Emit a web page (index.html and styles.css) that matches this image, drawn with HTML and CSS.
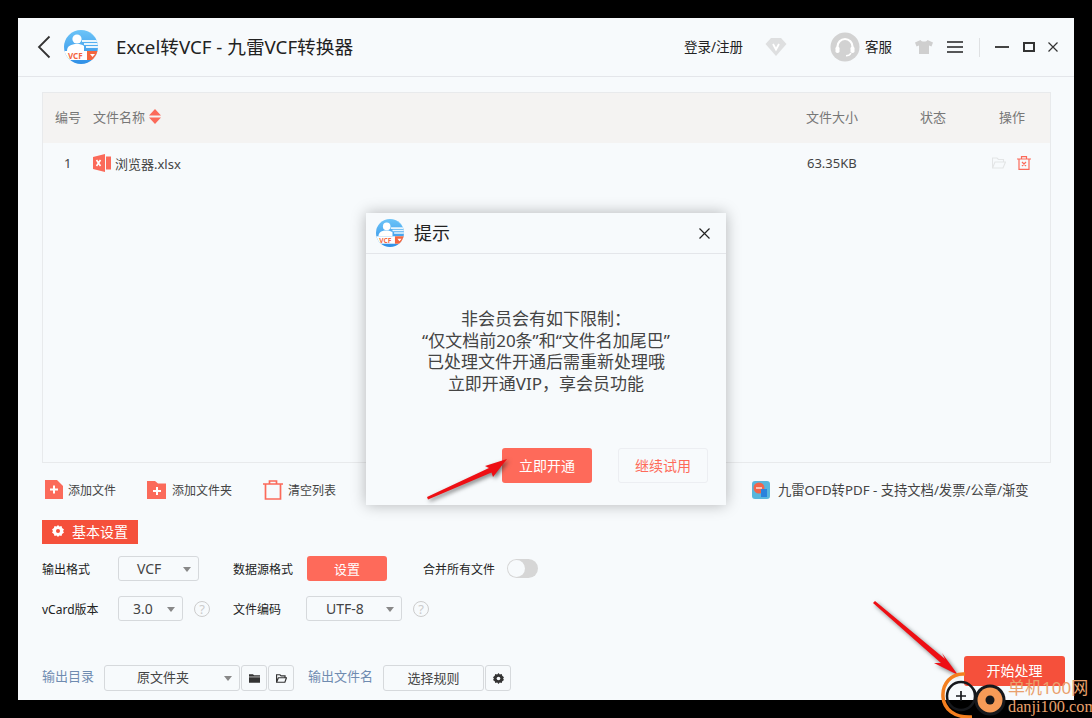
FILE: index.html
```html
<!DOCTYPE html>
<html lang="en">
<head>
    <meta charset="UTF-8">
    <meta name="viewport" content="width=device-width, initial-scale=1.0">
    <title>Excel转VCF - 九雷VCF转换器</title>
    <link rel="stylesheet" href="styles.css">
</head>
<body>
    <svg class="defs" width="0" height="0">
        <defs>
            <linearGradient id="logoBlue" x1="0" y1="0" x2="0" y2="1">
                <stop offset="0" stop-color="#6cc4f8"/>
                <stop offset="1" stop-color="#2f8fe6"/>
            </linearGradient>
            <clipPath id="logoClip"><circle cx="17" cy="17" r="17"/></clipPath>
            <symbol id="logo" viewBox="0 0 34 34">
                <g clip-path="url(#logoClip)">
                    <rect width="34" height="34" fill="url(#logoBlue)"/>
                    <path d="M23 0h11v10z" fill="#8fd3fa"/>
                    <circle cx="13" cy="9" r="4.6" fill="#fff"/>
                    <path d="M3 21c0-5 4-7 10-7 3 0 5 .6 7 2v5z" fill="#fff"/>
                    <path d="M18 10h16v2H18zM20 13h14v2H20zM22 16h12v2H22z" fill="#e8f5fd"/>
                    <rect y="21" width="34" height="9" fill="#fff"/>
                    <rect x="23" y="21" width="11" height="9" fill="#f4663f"/>
                    <path d="M26 24h5l-2.500 3z" fill="#fff"/>
                    <text x="4" y="29" class="logo-text">VCF</text>
                </g>
            </symbol>
        </defs>
    </svg>

    <div class="window">
        <header class="topbar">
            <svg class="back" width="14" height="24" viewBox="0 0 14 24"><path d="M12.500 1.500 2 12l10.500 10.500" fill="none" stroke="#333" stroke-width="1.800"/></svg>
            <svg class="app-logo" width="34" height="34"><use href="#logo"/></svg>
            <h1 class="app-title">Excel转VCF - 九雷VCF转换器</h1>
            <span class="login">登录/注册</span>
            <svg class="diamond" width="22" height="20" viewBox="0 0 22 20">
                <path d="M6 1h10l5.500 6L11 19 .5 7z" fill="#dedfe0"/>
                <path d="M8 7l3 5.500L14 7" fill="none" stroke="#fff" stroke-width="1.800"/>
            </svg>
            <svg class="headset" width="30" height="30" viewBox="0 0 30 30">
                <circle cx="15" cy="15" r="14.500" fill="#d2d2d2"/>
                <path d="M7.500 18v-3.500a7.500 7.500 0 0 1 15 0V18" fill="none" stroke="#fff" stroke-width="2.200"/>
                <rect x="5.500" y="14.500" width="4" height="6.500" rx="1.800" fill="#fff"/>
                <rect x="20.500" y="14.500" width="4" height="6.500" rx="1.800" fill="#fff"/>
                <path d="M21 21c-1 2-3 2.800-5 2.800" fill="none" stroke="#fff" stroke-width="1.400"/>
            </svg>
            <span class="service">客服</span>
            <svg class="shirt" width="18" height="14" viewBox="0 0 18 14"><path d="M5.500 0 0 2.500 1.500 6.500 4 5.500V14h10V5.500l2.500 1L18 2.500 12.500 0C11.500 2 6.500 2 5.500 0z" fill="#cfcfcf"/></svg>
            <svg class="menu" width="16" height="12" viewBox="0 0 16 12"><path d="M0 1h16M0 6h16M0 11h16" stroke="#222" stroke-width="1.400"/></svg>
            <span class="divider"></span>
            <svg class="win-min" width="14" height="2" viewBox="0 0 14 2"><rect width="14" height="2" fill="#444"/></svg>
            <svg class="win-max" width="12" height="10" viewBox="0 0 12 10"><rect x="1" y="1" width="10" height="8" fill="none" stroke="#333" stroke-width="2"/></svg>
            <svg class="win-close" width="10" height="10" viewBox="0 0 10 10"><path d="M.5.500l9 9M9.500.500l-9 9" stroke="#333" stroke-width="1.200"/></svg>
        </header>

        <section class="file-panel">
            <div class="file-head file-grid">
                <span>编号</span>
                <span class="sort-title">文件名称
                    <svg width="12" height="15" viewBox="0 0 12 15"><path d="M6 0l6 6.500H0zM6 15l6-6.500H0z" fill="#fb6a5a"/></svg>
                </span>
                <span>文件大小</span>
                <span>状态</span>
                <span class="head-ops">操作</span>
            </div>
            <div class="file-row file-grid">
                <span class="file-no">1</span>
                <span class="file-name">
                    <svg width="18" height="18" viewBox="0 0 18 18">
                        <path d="M0 3l12-3v18L0 15z" fill="#fb6a5a"/>
                        <rect x="13" y="2.500" width="5" height="13" fill="#fb6a5a"/>
                        <path d="M3.500 6l4 6M7.500 6l-4 6" stroke="#fff" stroke-width="1.600"/>
                    </svg>
                    浏览器.xlsx
                </span>
                <span class="file-size">63.35KB</span>
                <span></span>
                <span class="file-ops">
                    <svg width="14" height="12" viewBox="0 0 14 12"><path d="M.5 11V1h4.500l1.500 1.500h5V5M.5 11h10.500l2.500-6H3z" fill="none" stroke="#e3e5e6" stroke-width="1.100"/></svg>
                    <svg width="14" height="14" viewBox="0 0 14 14"><path d="M0 3h14M4.500 3V.6h5V3M2 3v10.400h10V3M5 6l4 4M9 6l-4 4" fill="none" stroke="#fb6a5a" stroke-width="1.200"/></svg>
                </span>
            </div>
        </section>

        <div class="toolbar">
            <span class="tool tool-file">
                <svg width="18" height="19" viewBox="0 0 18 19"><path d="M0 0h12l6 6v13H0z" fill="#fb6a5a"/><path d="M9 5.500v8M5 9.500h8" stroke="#fff" stroke-width="2"/></svg>
                添加文件
            </span>
            <span class="tool tool-folder">
                <svg width="19" height="18" viewBox="0 0 19 18"><path d="M0 0h8l3 2.500h8V18H0z" fill="#fb6a5a"/><path d="M10 6v8M6 10h8" stroke="#fff" stroke-width="2"/></svg>
                添加文件夹
            </span>
            <span class="tool tool-clear">
                <svg width="20" height="20" viewBox="0 0 20 20"><path d="M0 4h20M6.500 4V1h7v3M2.500 4v15h15V4" fill="none" stroke="#fb6a5a" stroke-width="1.700"/></svg>
                清空列表
            </span>
            <span class="tool tool-promo">
                <svg width="18" height="18" viewBox="0 0 18 18">
                    <rect width="18" height="18" rx="3" fill="#58b6dc"/>
                    <circle cx="7" cy="7" r="5.500" fill="#f1654a"/>
                    <rect x="9" y="8" width="6" height="8" fill="#2a82dc"/>
                    <path d="M4 7h6" stroke="#fff" stroke-width="1.200"/>
                </svg>
                九雷OFD转PDF - 支持文档/发票/公章/渐变
            </span>
        </div>

        <div class="settings-tag">
            <svg width="12" height="12" viewBox="0 0 12 12"><path d="M6 0l1.400 1.600 2.100-.6.600 2.100L12 4.500 11 6l1 1.500-1.900 1.400-.6 2.100-2.100-.6L6 12l-1.400-1.600-2.100.6-.6-2.100L0 7.500 1 6 0 4.500l1.900-1.400.6-2.100 2.100.6z" fill="#fff"/><circle cx="6" cy="6" r="2" fill="#f5503b"/></svg>
            基本设置
        </div>

        <div class="form-row form-row-first">
            <label class="field-label">输出格式</label>
            <div class="select select-format">VCF</div>
            <label class="field-label label-source">数据源格式</label>
            <button class="btn-set" type="button">设置</button>
            <label class="field-label label-merge">合并所有文件</label>
            <span class="switch"></span>
        </div>

        <div class="form-row form-row-second">
            <label class="field-label">vCard版本</label>
            <div class="select select-version">3.0</div>
            <span class="help">?</span>
            <label class="field-label label-encoding">文件编码</label>
            <div class="select select-encoding">UTF-8</div>
            <span class="help">?</span>
        </div>

        <div class="output-row">
            <label class="output-label">输出目录</label>
            <div class="select select-dir">原文件夹</div>
            <button class="icon-btn" type="button">
                <svg width="11" height="9" viewBox="0 0 14 11"><path d="M0 0h5l1.500 1.500H14V11H0z" fill="#333"/><path d="M0 3.500h14" stroke="#fff" stroke-width=".8"/></svg>
            </button>
            <button class="icon-btn" type="button">
                <svg width="11" height="9" viewBox="0 0 14 11"><path d="M.7 10.300V.7h4.300l1.500 1.500h5V4.500M.7 10.300h10.600l2-5.800H3z" fill="none" stroke="#333" stroke-width="1.500"/></svg>
            </button>
            <label class="output-label label-filename">输出文件名</label>
            <button class="rule-btn" type="button">选择规则</button>
            <button class="icon-btn" type="button">
                <svg width="11" height="11" viewBox="0 0 12 12"><path d="M6 0l1.400 1.600 2.100-.6.600 2.100L12 4.500 11 6l1 1.500-1.900 1.400-.6 2.100-2.100-.6L6 12l-1.400-1.600-2.100.6-.6-2.100L0 7.500 1 6 0 4.500l1.900-1.400.6-2.100 2.100.6z" fill="#333"/><circle cx="6" cy="6" r="2" fill="#f7fafc"/></svg>
            </button>
            <button class="btn-start" type="button">开始处理</button>
        </div>

        <div class="modal">
            <div class="modal-head">
                <svg width="28" height="28"><use href="#logo"/></svg>
                <span class="modal-title">提示</span>
                <svg class="modal-close" width="11" height="11" viewBox="0 0 11 11"><path d="M.5.500l10 10M10.500.500l-10 10" stroke="#222" stroke-width="1.200"/></svg>
            </div>
            <div class="modal-text">
                <p>非会员会有如下限制：</p>
                <p>“仅文档前20条”和“文件名加尾巴”</p>
                <p>已处理文件开通后需重新处理哦</p>
                <p>立即开通VIP，享会员功能</p>
            </div>
            <div class="modal-actions">
                <button class="btn-open" type="button">立即开通</button>
                <button class="btn-trial" type="button">继续试用</button>
            </div>
        </div>
    </div>

    <!-- red annotation arrows drawn on top of the screenshot -->
    <svg class="arrows" width="1092" height="718" viewBox="0 0 1092 718">
        <path d="M427 497 L489 468 L485 466 L507 459 L493 477 L491.500 472.500 L428 499.500z" fill="#ee0f14"/>
        <path d="M873 603 L875 601 L945 659 L942 653 L958 675 L934 663 L941 663z" fill="#ee0f14"/>
    </svg>

    <div class="watermark">
        <svg class="mark-logo" width="66" height="48" viewBox="0 0 66 48">
            <path d="M24 3C10 2 1 13 2 26c1 12 11 21 29 20" fill="none" stroke="#f47f1f" stroke-width="3.500"/>
            <circle cx="20" cy="25" r="14" fill="none" stroke="#16181c" stroke-width="2.500"/>
            <path d="M15 25h10M20 20v10" stroke="#16181c" stroke-width="1.700"/>
            <path d="M33 18l3 6 3-6M36 24v8" fill="none" stroke="#16181c" stroke-width="1.600"/>
            <circle cx="49" cy="29" r="15.500" fill="#16181c"/>
            <circle cx="49" cy="29" r="12.500" fill="#f79b57"/>
            <circle cx="49" cy="29" r="4.500" fill="#16181c"/>
        </svg>
        <span class="mark-cn">单机100网</span>
        <span class="mark-en">danji100.com</span>
    </div>
</body>
</html>
```

FILE: styles.css
```css
* {
    box-sizing: border-box;
}

body {
    margin: 0;
    width: 1092px;
    height: 718px;
    overflow: hidden;
    position: relative;
    background-color: #000;
    font-family: "Noto Sans", "Noto Sans CJK SC", sans-serif;
    color: #333;
}

.defs {
    position: absolute;
}

.logo-text {
    font-family: "Noto Sans", sans-serif;
    font-size: 8px;
    font-weight: 700;
    fill: #f4663f;
}

.window {
    position: relative;
    margin: 18px 0 0 18px;
    width: 1056px;
    height: 682px;
    background-color: #f7fafc;
}

/* top bar */
.topbar {
    display: flex;
    align-items: center;
    height: 59px;
    border-bottom: 1px solid #e4e6ea;
    padding-left: 19px;
}

.back {
    margin-right: 13px;
}

.app-logo {
    margin-right: 18px;
}

.app-title {
    margin: 0;
    width: 568px;
    font-size: 18.700px;
    line-height: 26px;
    font-weight: 400;
    color: #222;
    white-space: nowrap;
}

.login {
    width: 81px;
    padding-bottom: 2px;
    font-size: 13.500px;
    color: #222;
    white-space: nowrap;
}

.diamond {
    margin-right: 43px;
}

.headset {
    margin-right: 5px;
}

.service {
    width: 50px;
    padding-bottom: 2px;
    font-size: 13.500px;
    color: #222;
}

.shirt {
    margin-right: 14px;
}

.menu {
    margin-right: 16px;
}

.divider {
    width: 1px;
    height: 19px;
    background-color: #dfe1e3;
    margin-right: 15px;
}

.win-min {
    margin-right: 14px;
}

.win-max {
    margin-right: 13px;
}

/* file table */
.file-panel {
    margin: 15px 23px 0 24px;
    height: 371px;
    border: 1px solid #e8eaec;
}

.file-grid {
    display: grid;
    grid-template-columns: 38px 713px 114px 77px 1fr;
    align-items: center;
    padding-left: 12px;
    padding-bottom: 4px;
    font-size: 13px;
}

.file-head {
    height: 50px;
    background-color: #f4f3f2;
    color: #777;
}

.head-ops {
    padding-left: 2px;
}

.sort-title {
    display: flex;
    align-items: center;
    gap: 4px;
}

.file-row {
    height: 44px;
    color: #444;
}

.file-no {
    padding-left: 9px;
}

.file-name {
    display: flex;
    align-items: center;
    gap: 4px;
}

.file-size {
    padding-left: 1px;
}

.file-ops {
    display: flex;
    align-items: center;
    gap: 11px;
    margin-left: -5px;
}

/* toolbar under the table */
.toolbar {
    display: flex;
    align-items: center;
    height: 57px;
    padding-left: 27px;
    padding-bottom: 4px;
    font-size: 12px;
    color: #444;
}

.tool {
    display: flex;
    align-items: center;
    white-space: nowrap;
}

.tool svg {
    margin-right: 5px;
}

.tool-file {
    width: 102px;
}

.tool-folder {
    width: 116px;
}

.tool-folder svg {
    margin-right: 6px;
}

.tool-clear {
    width: 489px;
}

.tool-promo {
    font-size: 13.300px;
}

.tool-promo svg {
    margin-right: 8px;
}

/* settings */
.settings-tag {
    display: flex;
    align-items: center;
    gap: 8px;
    width: 96px;
    height: 24px;
    margin-left: 24px;
    padding-left: 10px;
    padding-bottom: 2px;
    background-color: #f5503b;
    color: #fff;
    font-size: 14px;
}

.form-row {
    display: flex;
    align-items: center;
    height: 25px;
    padding-left: 24px;
}

.form-row-first {
    margin-top: 12px;
}

.form-row-second {
    margin-top: 15px;
}

.field-label {
    width: 76px;
    font-size: 12px;
    color: #222;
    white-space: nowrap;
}

.label-source {
    width: 74px;
    margin-left: 34px;
}

.label-merge {
    width: 84px;
    margin-left: 36px;
}

.label-encoding {
    width: 73px;
    margin-left: 23px;
}

.select {
    position: relative;
    height: 25px;
    line-height: 23px;
    border: 1px solid #d6d9dc;
    border-radius: 3px;
    font-size: 14px;
    color: #444;
    padding-left: 18px;
}

.select::after {
    content: "";
    position: absolute;
    right: 7px;
    top: 10px;
    border-left: 4px solid transparent;
    border-right: 4px solid transparent;
    border-top: 5px solid #888;
}

.select-format {
    width: 81px;
}

.select-version {
    width: 65px;
    padding-left: 14px;
}

.select-encoding {
    width: 96px;
    padding-left: 19px;
}

.select-dir {
    width: 136px;
    height: 26px;
    padding-left: 32px;
    margin-left: 9px;
    font-size: 13px;
}

.help {
    width: 16px;
    height: 16px;
    margin-left: 11px;
    border: 1px solid #ccc;
    border-radius: 50%;
    font-size: 13px;
    line-height: 14px;
    text-align: center;
    color: #ccc;
}

.btn-set {
    width: 80px;
    height: 25px;
    padding: 0;
    border: none;
    border-radius: 3px;
    background-color: #fe6a5a;
    color: #fff;
    font: inherit;
    font-size: 13px;
}

.switch {
    position: relative;
    width: 31px;
    height: 19px;
    border-radius: 10px;
    background-color: #d6d6d6;
}

.switch::before {
    content: "";
    position: absolute;
    left: 1px;
    top: 1px;
    width: 17px;
    height: 17px;
    border-radius: 50%;
    background-color: #f7fafc;
}

/* output row */
.output-row {
    display: flex;
    align-items: flex-start;
    margin-top: 35px;
    padding-left: 24px;
    height: 36px;
    position: relative;
}

.output-label {
    width: 53px;
    font-size: 13px;
    line-height: 24px;
    color: #6f8bb0;
    margin-top: 8px;
    white-space: nowrap;
}

.select-dir,
.icon-btn,
.rule-btn {
    margin-top: 9px;
}

.icon-btn {
    display: flex;
    align-items: center;
    justify-content: center;
    width: 26px;
    height: 26px;
    margin-left: 1px;
    padding: 0;
    border: 1px solid #d6d9dc;
    border-radius: 3px;
    background: transparent;
}

.label-filename {
    width: 75px;
    margin-left: 14px;
}

.rule-btn {
    width: 101px;
    height: 26px;
    padding: 0 0 2px;
    border: 1px solid #d6d9dc;
    border-radius: 3px;
    background: transparent;
    font: inherit;
    font-size: 13px;
    color: #444;
}

.btn-start {
    position: absolute;
    right: 9px;
    top: 0;
    width: 101px;
    height: 30px;
    padding: 0 0 2px;
    border: none;
    border-radius: 3px;
    background-color: #f5503b;
    color: #fff;
    font: inherit;
    font-size: 14px;
}

/* dialog */
.modal {
    position: absolute;
    left: 348px;
    top: 195px;
    width: 360px;
    height: 292px;
    background-color: #f7fafc;
    box-shadow: 0 0 14px rgba(0, 0, 0, 0.28);
}

.modal-head {
    display: flex;
    align-items: center;
    height: 41px;
    padding-left: 10px;
    border-bottom: 1px solid #e4e6ea;
}

.modal-title {
    margin-left: 10px;
    padding-bottom: 2px;
    font-size: 18px;
    color: #222;
}

.modal-close {
    margin-left: auto;
    margin-right: 16px;
}

.modal-text {
    margin-top: 54px;
    text-align: center;
    font-size: 17px;
    line-height: 21.600px;
    color: #444;
}

.modal-text p {
    margin: 0;
    white-space: nowrap;
}

.modal-actions {
    display: flex;
    gap: 26px;
    position: absolute;
    left: 136px;
    top: 235px;
}

.btn-open,
.btn-trial {
    width: 90px;
    height: 35px;
    padding: 0 0 2px;
    border: none;
    border-radius: 3px;
    font: inherit;
    font-size: 14px;
}

.btn-open {
    background-color: #fe6a5a;
    color: #fff;
}

.btn-trial {
    background-color: #f7fafc;
    border: 1px solid #eceef2;
    color: #fe6a5a;
}

/* overlays */
.arrows {
    position: absolute;
    left: 0;
    top: 0;
    filter: drop-shadow(2px 2px 2px rgba(40, 40, 40, 0.6));
}

.watermark {
    position: absolute;
    left: 0;
    top: 0;
    width: 1092px;
    height: 718px;
}

.mark-logo {
    position: absolute;
    left: 941px;
    top: 671px;
}

.mark-cn {
    position: absolute;
    left: 1008px;
    top: 674px;
    font-size: 17px;
    line-height: 28px;
    color: #e9a06c;
    white-space: nowrap;
}

.mark-en {
    position: absolute;
    left: 1008px;
    top: 698px;
    font-family: "Liberation Serif", serif;
    font-size: 16.300px;
    line-height: 18px;
    color: #e9a06c;
    white-space: nowrap;
}
```
